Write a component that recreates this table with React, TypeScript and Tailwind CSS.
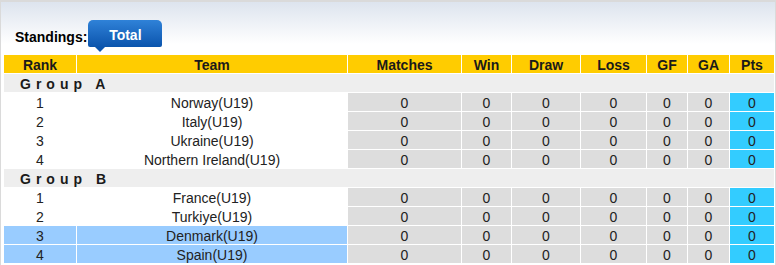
import * as React from "react";

type Row = { rank: number; team: string; hl?: boolean };

const GROUPS: { name: string; rows: Row[] }[] = [
  {
    name: "Group A",
    rows: [
      { rank: 1, team: "Norway(U19)" },
      { rank: 2, team: "Italy(U19)" },
      { rank: 3, team: "Ukraine(U19)" },
      { rank: 4, team: "Northern Ireland(U19)" },
    ],
  },
  {
    name: "Group B",
    rows: [
      { rank: 1, team: "France(U19)" },
      { rank: 2, team: "Turkiye(U19)" },
      { rank: 3, team: "Denmark(U19)", hl: true },
      { rank: 4, team: "Spain(U19)", hl: true },
    ],
  },
];

const COLS = [
  { label: "Rank", w: "w-[72px]" },
  { label: "Team", w: "w-[270px]" },
  { label: "Matches", w: "w-[113px]" },
  { label: "Win", w: "w-[49px]" },
  { label: "Draw", w: "w-[68px]" },
  { label: "Loss", w: "w-[65px]" },
  { label: "GF", w: "w-[40px]" },
  { label: "GA", w: "w-[41px]" },
  { label: "Pts", w: "w-[44px]" },
];

export default function App() {
  return (
    <div className="w-[776px] h-[265px] overflow-hidden bg-white font-['Liberation_Sans',Arial,sans-serif] text-[14px] text-[#222]">
      <div className="h-full border-t-2 border-x border-[#dadada] bg-gradient-to-b from-[#dde4ee] via-white via-[16%] to-white">
        <div className="flex h-[52px] items-end pl-[14px] pb-[7px]">
          <span className="mb-[3px] font-bold text-black leading-none">Standings:</span>
          <div className="relative ml-px">
            <div className="flex h-[27px] w-[74px] items-center justify-center rounded-t-[5px] rounded-b-[2px] bg-gradient-to-b from-[#2f82d8] to-[#0a54ad] pt-[3px] font-bold text-white">
              Total
            </div>
            <div className="absolute left-[7px] top-[27px] h-0 w-0 border-x-[5px] border-t-[5px] border-x-transparent border-t-[#0a54ad]" />
          </div>
        </div>
        <table className="ml-[2px] table-fixed border-separate border-spacing-[1px] leading-none">
          <thead>
            <tr>
              {COLS.map((c) => (
                <th key={c.label} className={`${c.w} h-[18px] bg-[#ffcc00] p-0 pt-px text-center font-bold text-[#1a1a1a]`}>
                  {c.label}
                </th>
              ))}
            </tr>
          </thead>
          <tbody>
            {GROUPS.map((g) => (
              <React.Fragment key={g.name}>
                <tr>
                  <td colSpan={9} className="h-[18px] bg-[#eeeeee] p-0 pt-px pl-[16px] font-bold tracking-[5px] text-[#1a1a1a]">
                    {g.name}
                  </td>
                </tr>
                {g.rows.map((r) => (
                  <tr key={r.team}>
                    <td className={`h-[18px] p-0 pt-px text-center ${r.hl ? "bg-[#99ccff]" : "bg-white"}`}>{r.rank}</td>
                    <td className={`p-0 pt-px text-center ${r.hl ? "bg-[#99ccff]" : "bg-white"}`}>{r.team}</td>
                    {[0, 1, 2, 3, 4, 5].map((i) => (
                      <td key={i} className="bg-[#dddddd] p-0 pt-px text-center">0</td>
                    ))}
                    <td className="bg-[#33ccff] p-0 pt-px text-center">0</td>
                  </tr>
                ))}
              </React.Fragment>
            ))}
          </tbody>
        </table>
      </div>
    </div>
  );
}
